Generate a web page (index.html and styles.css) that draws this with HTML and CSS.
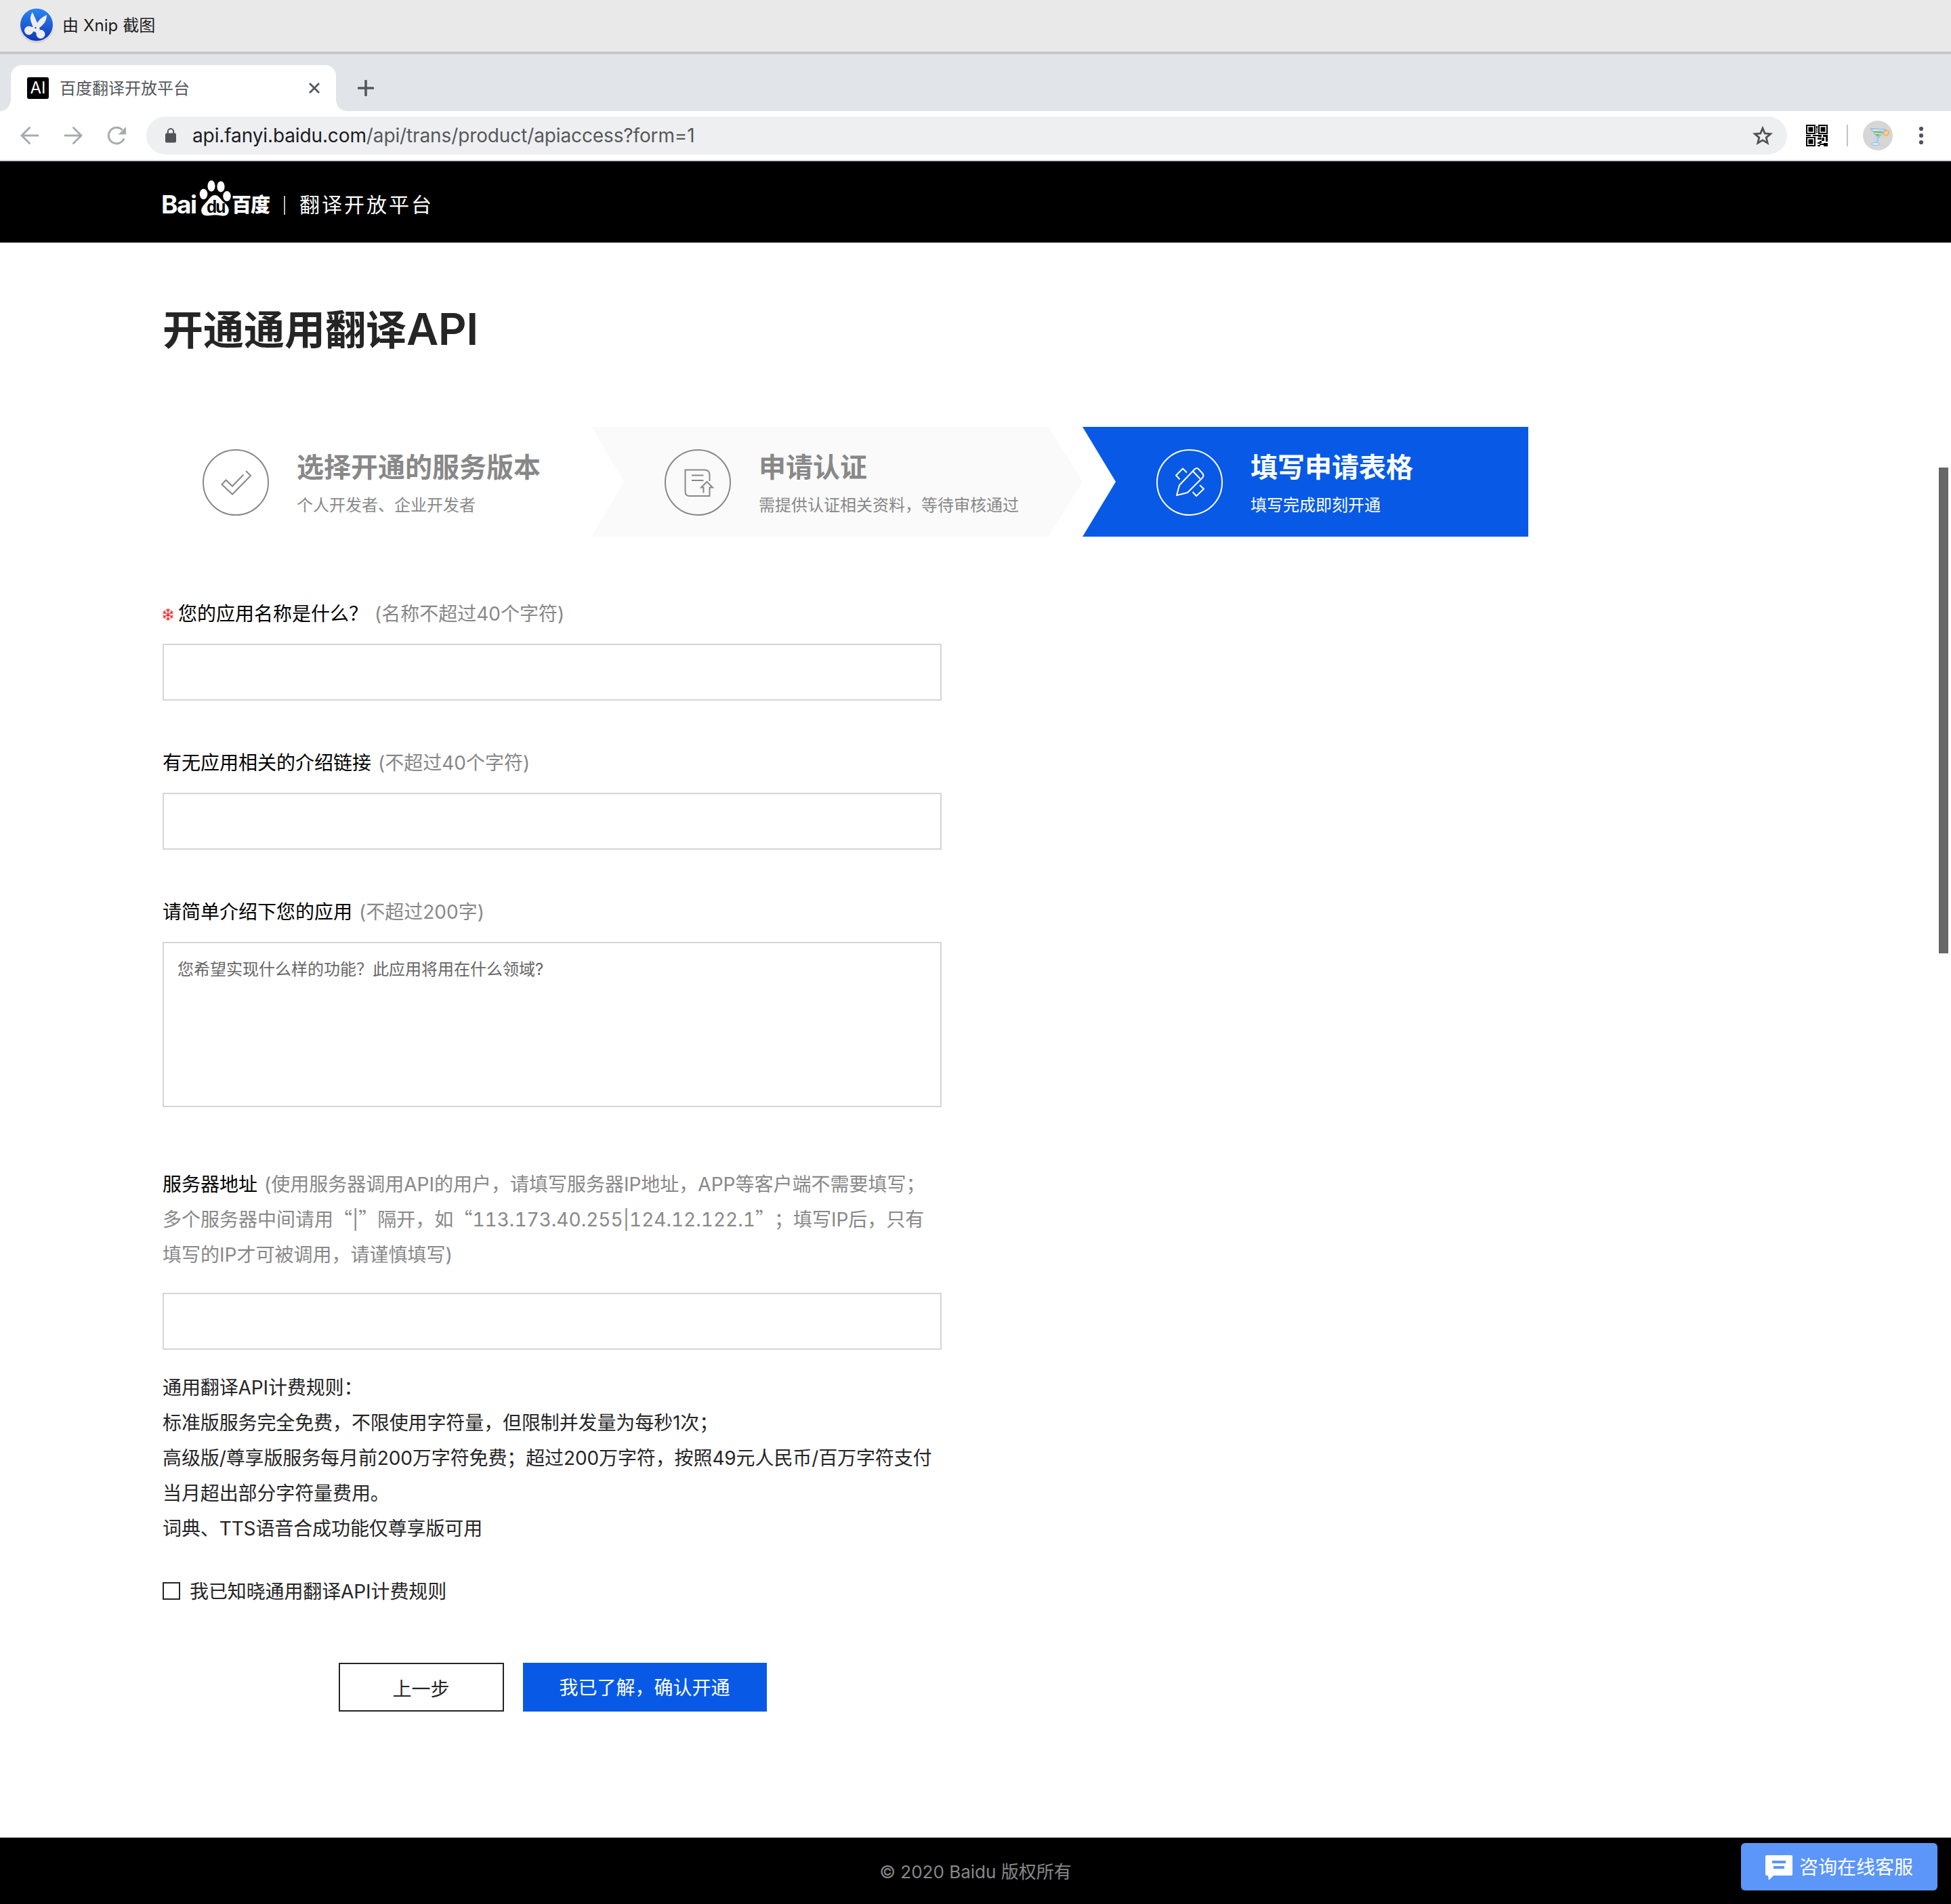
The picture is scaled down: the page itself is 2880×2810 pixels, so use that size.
FILE: index.html
```html
<!DOCTYPE html>
<html lang="zh-CN">
<head>
<meta charset="utf-8">
<title>百度翻译开放平台</title>
<link rel="stylesheet" href="styles.css">
</head>
<body>
<div class="capture-bar">
  <svg class="capture-icon" width="56" height="60" viewBox="0 0 56 60">
    <defs>
      <linearGradient id="xnip" x1="0" y1="0" x2="0" y2="1"><stop offset="0" stop-color="#2b86f3"/><stop offset="1" stop-color="#1237b4"/></linearGradient>
    </defs>
    <circle cx="28" cy="31" r="25.5" fill="#cfcfd2"/>
    <circle cx="28" cy="29.500" r="25" fill="#f4f4f6"/>
    <circle cx="28" cy="29.500" r="24" fill="url(#xnip)"/>
    <g fill="#ededf0">
      <path d="M22 11C18 17 18.500 22 20.500 27L24 36L28 40L33 37L30.500 30Z"/>
      <path d="M43 15C36 18 32 22 29 27L24.500 33L22 38L27 41L32 34C38 30 43 24 43 15Z"/>
      <circle cx="16.500" cy="38" r="6.500"/><circle cx="34" cy="43.500" r="6.500"/>
      <path d="M15 32L24 33L31 38L38 42L29 44L25 38L20 43Z"/>
    </g>
    <circle cx="26.500" cy="34" r="1.300" fill="#1f5fd8"/>
  </svg>
  <span class="capture-text">由 Xnip 截图</span>
</div>

<div class="tab-strip">
  <div class="tab">
    <span class="favicon">AI</span>
    <span class="tab-title">百度翻译开放平台</span>
    <svg width="20" height="20" viewBox="0 0 20 20"><path d="M3 3L17 17M17 3L3 17" stroke="#54575b" stroke-width="2.800" fill="none"/></svg>
  </div>
  <svg class="new-tab" width="24" height="24" viewBox="0 0 24 24"><path d="M12 1.500V22.500M1.500 12H22.500" stroke="#54575b" stroke-width="3.600" stroke-linecap="round"/></svg>
</div>

<div class="toolbar">
  <div class="nav-icons">
    <svg width="28" height="28" viewBox="0 0 28 28"><path d="M26 14H2.500M13.500 2.500L2 14L13.500 25.500" fill="none" stroke="#a7abaf" stroke-width="3" stroke-linecap="round"/></svg>
    <svg width="28" height="28" viewBox="0 0 28 28"><path d="M2 14H25.500M14.500 2.500L26 14L14.500 25.500" fill="none" stroke="#a7abaf" stroke-width="3" stroke-linecap="round"/></svg>
    <svg width="28" height="28" viewBox="0 0 28 28"><path d="M25 18.500A11.800 11.800 0 1 1 22.500 5.800" fill="none" stroke="#a7abaf" stroke-width="3"/><path d="M28 1V12.500H16.500Z" fill="#a7abaf"/></svg>
  </div>
  <div class="address">
    <svg class="lock" width="16" height="22" viewBox="0 0 16 22"><rect x="0" y="7.500" width="16" height="14" rx="2" fill="#4f5256"/><path d="M3.800 8.500V5.200A4.200 4.200 0 0 1 12.200 5.200V8.500" fill="none" stroke="#4f5256" stroke-width="2"/></svg>
    <span class="url"><b>api.fanyi.baidu.com</b>/api/trans/product/apiaccess?form=1</span>
    <svg class="star" width="30" height="29" viewBox="0 0 30 29"><path d="M15 3.200L18.200 10.900L26.600 11.600L20.200 17.100L22.200 25.200L15 20.900L7.800 25.200L9.800 17.100L3.400 11.600L11.800 10.900Z" fill="none" stroke="#4f5256" stroke-width="2.800"/></svg>
  </div>
  <svg class="qr" width="32" height="32" viewBox="0 0 32 32">
    <g fill="none" stroke="#000" stroke-width="2"><rect x="1" y="1" width="12" height="12"/><rect x="19" y="1" width="12" height="12"/><rect x="1" y="19" width="12" height="12"/></g>
    <path d="M3.500 3.500h7v7h-7zM21.500 3.500h7v7h-7zM3.500 21.500h7v7h-7zM15 2h2v4h-2zM15 7h2v2h-2zM15 10h2v2h-2zM0 15h7v2H0zM10 15h13v3h-5v-1h-8zM25 15h7v10h-3v-7h-4zM17 19h6v3h-6zM24 19h3v5h-4v3h-3v-3h3zM17 26h4v2h3v2h-3v2h-4v-2h3v-2h-3zM26 27h6v5h-6v-2h-2v-2h2z" fill="#000"/>
  </svg>
  <span class="separator"></span>
  <svg class="avatar" width="44" height="44" viewBox="0 0 44 44">
    <circle cx="22" cy="22" r="22" fill="#d6d6d6"/>
    <circle cx="34" cy="18" r="5" fill="#f6b455"/><circle cx="34" cy="18" r="3" fill="#fbd08a"/>
    <path d="M11.500 12L33 13.500L22.500 25L20.500 34" fill="none" stroke="#8fbdea" stroke-width="2" stroke-linejoin="round"/>
    <path d="M11.500 12L33 13.500L22 25Z" fill="#dcebf8" stroke="#8fbdea" stroke-width="1.200"/>
    <path d="M15 15.500L30 15.800L21.500 23.500Z" fill="#7db35a"/><path d="M17 17.800L28 18.400L27 19.800L18.500 19.600Z" fill="#e5f3d3"/>
    <path d="M20.500 24L19.500 34" stroke="#b5d7f6" stroke-width="3"/><ellipse cx="18.500" cy="34.500" rx="6" ry="2" fill="#dcebf8" stroke="#86b7e8"/>
  </svg>
  <svg class="menu-dots" width="8" height="28" viewBox="0 0 8 28"><circle cx="4" cy="4" r="3.100" fill="#50535a"/><circle cx="4" cy="14" r="3.100" fill="#50535a"/><circle cx="4" cy="24" r="3.100" fill="#50535a"/></svg>
</div>

<header class="site-header">
  <div class="logo">
    <span class="logo-latin">Bai</span>
    <span class="paw">
      <svg width="48" height="54" viewBox="0 0 48 54" fill="#fff"><ellipse cx="6.500" cy="20.500" rx="5.800" ry="7.800"/><ellipse cx="18" cy="8.500" rx="5.600" ry="8.200"/><ellipse cx="32" cy="9.500" rx="5.600" ry="8"/><ellipse cx="41" cy="23.500" rx="5.800" ry="7.600"/><path d="M23.500 22C29 22 31 28 37 33C43 38 45 43 43 48C41 53 36 53 31 52C26 51 21 51 16 52C10 53 5 52 3.500 47C2 42 6 37 10 33C15 28 17 22 23.500 22Z"/></svg>
      <span class="du">du</span>
    </span>
    <span class="logo-cn">百度</span>
  </div>
  <span class="logo-divider"></span>
  <span class="platform">翻译开放平台</span>
</header>

<main class="page">
  <h1>开通通用翻译<span>API</span></h1>

  <div class="steps">
    <div class="step step-first">
      <svg width="98" height="98" viewBox="0 0 98 98" fill="none" stroke="currentColor" stroke-width="2"><circle cx="49" cy="49" r="48"/><path d="M60.500 37.500L44 54.500L34.500 45.500L28.500 52L44 66.500L71 39L64 32"/></svg>
      <div class="step-text"><strong>选择开通的服务版本</strong><span>个人开发者、企业开发者</span></div>
    </div>
    <div class="step step-middle">
      <svg width="98" height="98" viewBox="0 0 98 98" fill="none" stroke="currentColor" stroke-width="2"><circle cx="49" cy="49" r="48"/><path d="M66.500 47V38Q66.500 30.500 59 30.500H30.500V62Q30.500 69 37 69H66.500V56.500H71L62.500 48L54 56.500H57.500V64.500M40 38.500H57.500M40 46H57.500"/></svg>
      <div class="step-text"><strong>申请认证</strong><span>需提供认证相关资料，等待审核通过</span></div>
    </div>
    <div class="step step-active">
      <svg width="98" height="98" viewBox="0 0 98 98" fill="none" stroke="currentColor" stroke-width="2"><circle cx="49" cy="49" r="48"/><path stroke-linejoin="round" d="M30 68L34 53L56.500 29.500Q59.500 26.500 62.500 29.500L67.500 35Q71 39 68 42L46 64ZM54 32.500L64.500 43.500M34.500 44.500L29 38.500L39 28.500L45 34.500M64 53L70 58.500L59 69L53.500 63"/></svg>
      <div class="step-text"><strong>填写申请表格</strong><span>填写完成即刻开通</span></div>
    </div>
  </div>

  <form class="form">
    <label class="field-label"><svg class="required" width="16" height="18" viewBox="0 0 16 18" fill="none" stroke="#fa1e1e" stroke-width="1.300"><path d="M8 0V18M.5 4.500L15.500 13.500M15.500 4.500L.5 13.500M5.500 1.500L8 4L10.500 1.500M5.500 16.500L8 14L10.500 16.500M.5 7.500L4 6.600L3 3M15.500 7.500L12 6.600L13 3M.5 10.500L4 11.400L3 15M15.500 10.500L12 11.400L13 15"/></svg>您的应用名称是什么？<span class="hint">(名称不超过40个字符)</span></label>
    <input class="text-input" type="text">
    <label class="field-label">有无应用相关的介绍链接<span class="hint">(不超过40个字符)</span></label>
    <input class="text-input" type="text">
    <label class="field-label">请简单介绍下您的应用<span class="hint">(不超过200字)</span></label>
    <textarea class="text-area" placeholder="您希望实现什么样的功能？此应用将用在什么领域?"></textarea>
    <label class="field-label server-label">服务器地址<span class="hint">(使用服务器调用API的用户，请填写服务器IP地址，APP等客户端不需要填写；</span><br><span class="hint-line">多个服务器中间请用<i>“</i>|<i>”</i>隔开，如<i>“</i>113.173.40.255|124.12.122.1<i>”</i>；填写IP后，只有</span><br><span class="hint-line">填写的IP才可被调用，请谨慎填写)</span></label>
    <input class="text-input server-input" type="text">
    <div class="rules">
      <p>通用翻译API计费规则：</p>
      <p>标准版服务完全免费，不限使用字符量，但限制并发量为每秒1次；</p>
      <p>高级版/尊享版服务每月前200万字符免费；超过200万字符，按照49元人民币/百万字符支付</p>
      <p>当月超出部分字符量费用。</p>
      <p>词典、TTS语音合成功能仅尊享版可用</p>
    </div>
    <label class="agree"><input type="checkbox"><span>我已知晓通用翻译API计费规则</span></label>
    <div class="actions">
      <button type="button" class="btn btn-back">上一步</button>
      <button type="button" class="btn btn-primary">我已了解，确认开通</button>
    </div>
  </form>
</main>

<footer class="site-footer">© 2020 Baidu 版权所有</footer>

<button type="button" class="chat">
  <svg width="40" height="37" viewBox="0 0 40 37"><path d="M2 0H38Q40 0 40 2V28Q40 30 38 30H12L5 37L4 30H2Q0 30 0 28V2Q0 0 2 0Z" fill="#fff"/><path d="M10 8H30V12H10ZM12 16H28V20H12Z" fill="#5c96f8"/></svg>
  <span>咨询在线客服</span>
</button>
<div class="scroll-thumb"></div>
</body>
</html>
```
FILE: styles.css
```css
* { box-sizing: border-box; }
body {
  margin: 0;
  width: 2880px;
  background: #fff;
  color: #252525;
  font-family: Inter, "Noto Sans CJK SC", sans-serif;
  font-size: 28px;
  white-space: nowrap;
  text-spacing-trim: space-all;
}
svg { display: block; flex: none; }

/* Capture tool title bar */
.capture-bar {
  display: flex;
  align-items: center;
  height: 80px;
  padding: 0 0 2px 26px;
  background: #e9e9e9;
  border-bottom: 4px solid #c8c7c8;
}
.capture-text { margin-left: 10px; padding-bottom: 3px; font-size: 24px; letter-spacing: .1px; color: #1c1c1c; }

/* Browser chrome */
.tab-strip { display: flex; height: 84px; padding: 16px 0 0 16px; background: #e1e4e9; }
.tab {
  position: relative;
  display: flex;
  align-items: center;
  width: 480px;
  height: 68px;
  padding: 0 22px 0 24px;
  background: #fff;
  border-radius: 16px 16px 0 0;
}
.tab::before, .tab::after {
  content: "";
  position: absolute;
  bottom: 0;
  width: 16px;
  height: 16px;
}
.tab::before { left: -16px; background: radial-gradient(circle at 0 0, transparent 15.5px, #fff 16px); }
.tab::after { right: -16px; background: radial-gradient(circle at 100% 0, transparent 15.5px, #fff 16px); }
.favicon {
  width: 32px;
  height: 32px;
  border-radius: 3px;
  background: #000;
  color: #fff;
  font-size: 24px;
  line-height: 32px;
  text-align: center;
}
.tab-title { flex: 1; margin-left: 16px; padding-bottom: 3px; font-size: 24px; color: #54575b; }
.new-tab { margin: 22px 0 0 32px; }
.toolbar {
  display: flex;
  align-items: center;
  height: 74px;
  padding-left: 30px;
  background: #fff;
  border-bottom: 2px solid #d1d2d7;
}
.nav-icons { display: flex; gap: 36px; width: 186px; }
.address {
  display: flex;
  align-items: center;
  width: 2422px;
  height: 56px;
  padding: 0 21px 0 28px;
  border-radius: 28px;
  background: #eeeff1;
}
.url { flex: 1; margin-left: 24px; font-size: 28px; letter-spacing: -.12px; color: #56585b; }
.url b { font-weight: 400; color: #1b1c1f; }
.qr { margin-left: 28px; }
.separator { width: 2px; height: 32px; margin-left: 28px; background: #c4c4c4; }
.avatar { margin-left: 22px; }
.menu-dots { margin-left: 38px; }

/* Site header */
.site-header {
  display: flex;
  height: 120px;
  padding: 28px 0 0 240px;
  background: #000;
  color: #fff;
}
.logo { display: flex; width: 158px; }
.logo-latin { width: 54px; padding-top: 16px; margin-left: -2px; margin-right: 2px; font-size: 37px; font-weight: 700; line-height: 40px; letter-spacing: -1.5px; }
.paw { position: relative; width: 48px; }
.du {
  position: absolute;
  left: 11px;
  top: 25px;
  font: 700 25px/28px "Liberation Sans", sans-serif;
  letter-spacing: -2px;
  color: #000;
}
.logo-cn { padding-top: 17px; font-size: 29px; font-weight: 900; line-height: 40px; letter-spacing: -1px; }
.logo-divider { width: 2px; height: 28px; margin: 23px 21px 0 21px; background: #bbb; }
.platform { padding-top: 16px; font-size: 30px; line-height: 40px; letter-spacing: 3px; }

/* Main content */
.page { width: 2256px; height: 2354px; padding: 89px 0 0 240px; }
h1 { margin: 0 0 103px; font-size: 60px; font-weight: 700; line-height: 80px; }
h1 span { font-size: 65px; font-weight: 600; line-height: 0; letter-spacing: -.5px; }
.steps { display: flex; height: 162px; margin-bottom: 88px; }
.step { display: flex; gap: 41px; padding-top: 33px; color: #888; }
.step-first { width: 633px; padding-left: 59px; }
.step-middle {
  width: 725px;
  padding-left: 108px;
  background: #fafafa;
  clip-path: polygon(0 0, 675px 0, 100% 50%, 675px 100%, 0 100%, 48px 50%);
}
.step-active {
  width: 658px;
  padding-left: 109px;
  background: #085ae6;
  color: #fff;
  clip-path: polygon(0 0, 100% 0, 100% 100%, 0 100%, 49px 50%);
}
.step-text { display: flex; flex-direction: column; }
.step-text strong { font-size: 40px; font-weight: 700; line-height: 54px; }
.step-text span { margin-top: 9px; font-size: 24px; line-height: 40px; }

/* Application form */
.form { width: 1150px; }
.field-label { display: block; height: 52px; margin-bottom: 18px; line-height: 52px; color: #000; }
.required { display: inline-block; margin-right: 7px; }
.hint { margin-left: 10px; color: #888; }
.hint-line { color: #888; font-variant-numeric: tabular-nums; }
.hint-line i { font-family: "Noto Sans CJK SC", sans-serif; font-style: normal; line-height: 0; }
.text-input, .text-area {
  display: block;
  width: 1150px;
  height: 84px;
  margin: 0 0 66px;
  border: 2px solid #d5d5d5;
  border-radius: 0;
  background: #fff;
}
.text-area {
  height: 244px;
  margin-bottom: 88px;
  padding: 21px 20px;
  resize: none;
  font-family: inherit;
  font-size: 24px;
  line-height: 36px;
}
.text-area::placeholder { color: #666; }
.server-label { height: 156px; margin-bottom: 30px; }
.server-input { margin-bottom: 30px; }
.rules p { margin: 0; line-height: 52px; letter-spacing: -.11px; }
.agree { display: flex; align-items: center; gap: 14px; height: 52px; margin-top: 40px; letter-spacing: -.11px; }
.agree span { padding-bottom: 2px; }
.agree input {
  appearance: none;
  width: 26px;
  height: 26px;
  margin: 0;
  border: 2px solid #252525;
}
.actions { display: flex; gap: 28px; margin: 80px 0 0 260px; }
.btn { height: 72px; padding: 0 1px 0 0; font-family: inherit; font-size: 28px; }
.btn-back { width: 244px; padding-top: 1px; border: 2px solid #252525; background: #fff; color: #252525; }
.btn-primary { width: 360px; padding-bottom: 3px; border: 0; background: #085ae6; color: #fff; }

.site-footer {
  display: flex;
  justify-content: center;
  align-items: center;
  height: 98px;
  padding-bottom: 1px;
  background: #000;
  color: #888;
  font-size: 26px;
}

/* Floating controls */
.chat {
  position: fixed;
  left: 2570px;
  top: 2720px;
  display: flex;
  align-items: center;
  gap: 10px;
  width: 290px;
  height: 70px;
  padding: 3px 0 0 36px;
  border: 0;
  border-radius: 6px;
  background: #5c96f8;
  color: #fff;
  font-family: inherit;
  font-size: 28px;
}
.chat span { padding-bottom: 6px; }
.scroll-thumb { position: fixed; left: 2862px; top: 690px; width: 14px; height: 717px; background: #676767; }
```
